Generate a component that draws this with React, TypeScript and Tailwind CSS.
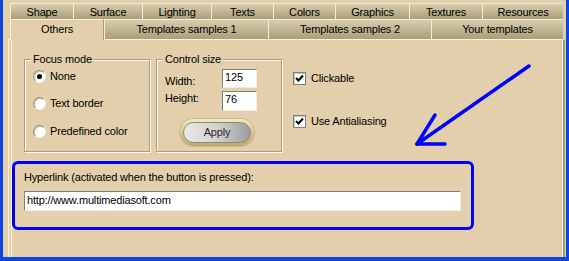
const topTabs = [
  { label: "Shape", w: "w-[63px]" },
  { label: "Surface", w: "w-[69px]" },
  { label: "Lighting", w: "w-[69px]" },
  { label: "Texts", w: "w-[62px]" },
  { label: "Colors", w: "w-[62px]" },
  { label: "Graphics", w: "w-[74px]" },
  { label: "Textures", w: "w-[73px]" },
  { label: "Resources", w: "w-[81px]" },
];

const frontTabs = [
  { label: "Templates samples 1", w: "w-[164px]" },
  { label: "Templates samples 2", w: "w-[163px]" },
  { label: "Your templates", w: "w-[132px]" },
];

const Radio = ({ label, checked }: { label: string; checked?: boolean }) => (
  <div className="flex items-center gap-[4px] h-[13px]">
    <span className="w-[13px] h-[13px] rounded-full bg-white border border-t-[#8d8a80] border-l-[#8d8a80] border-r-[#f4f1e8] border-b-[#f4f1e8] shadow-[inset_1px_1px_1px_#c9c6bc] flex items-center justify-center">
      {checked && <span className="w-[5px] h-[5px] rounded-full bg-black" />}
    </span>
    <span>{label}</span>
  </div>
);

const Check = ({ label }: { label: string }) => (
  <div className="flex items-center gap-[5px]">
    <span className="w-[13px] h-[13px] bg-white border border-[#7f7f7f] shadow-[inset_1px_1px_0_#c8c8c8] flex items-center justify-center">
      <svg width="9" height="9" viewBox="0 0 9 9">
        <polyline points="1,4 3.5,6.5 8,1.5" fill="none" stroke="black" strokeWidth="2" />
      </svg>
    </span>
    <span>{label}</span>
  </div>
);

const groupBox =
  "w-[126px] h-[99px] border border-[#a89e86] shadow-[inset_1px_1px_0_#fbf7ec,1px_1px_0_#fbf7ec]";

export default function App() {
  return (
    <div className="w-[569px] h-[261px] overflow-hidden bg-[#e3cfab] border-l-[3px] border-r-[3px] border-b-[4px] border-[#0b46e0] flex flex-col text-[11px] leading-[13px] tracking-[-0.17px] text-black font-['Liberation_Sans',Arial,sans-serif]">
      {/* tab rows */}
      <div className="pt-[3px] pl-[7px] flex flex-col">
        <div className="flex h-[16px]">
          {topTabs.map((t) => (
            <div
              key={t.label}
              className={`${t.w} h-full flex justify-center pt-[2px] border-t border-l border-[#f3ecd8] bg-gradient-to-b from-[#d9ceac] to-[#ab9d7a]`}
            >
              {t.label}
            </div>
          ))}
        </div>
        <div className="flex h-[20px]">
          <div className="relative z-10 w-[94px] h-[21px] flex justify-center pt-[3px] border-t border-l border-[#f8f2df] border-r border-r-[#a39a84] bg-[#e3cfab]">
            Others
          </div>
          {frontTabs.map((t) => (
            <div
              key={t.label}
              className={`${t.w} h-full flex justify-center pt-[3px] border-t border-l border-[#f3ecd8] bg-gradient-to-b from-[#d9ceac] to-[#ab9d7a]`}
            >
              {t.label}
            </div>
          ))}
        </div>
      </div>

      {/* tab page */}
      <div className="ml-[5px] mr-[1px] flex-1 flex border-l border-t border-[#f8f2df] border-r-2 border-r-[#a39a84] pl-[2px]">
        <div className="flex-1 flex flex-col border-l border-r border-[#f8f2df]">
          <div className="pt-[13px] pr-[27px] flex items-start">
            <fieldset className={`ml-[12px] ${groupBox}`}>
              <legend className="ml-[6px] px-[2px] bg-[#e3cfab] leading-[13px]">Focus mode</legend>
              <div className="pl-[8px] pt-[4px] flex flex-col">
                <Radio label="None" checked />
                <div className="mt-[14px]">
                  <Radio label="Text border" />
                </div>
                <div className="mt-[15px]">
                  <Radio label="Predefined color" />
                </div>
              </div>
            </fieldset>

            <fieldset className={`ml-[6px] ${groupBox}`}>
              <legend className="ml-[6px] px-[2px] bg-[#e3cfab] leading-[13px]">Control size</legend>
              <div className="pt-[3px] flex flex-col">
                <div className="flex">
                  <span className="w-[65px] pl-[8px] pt-[6px]">Width:</span>
                  <div className="w-[35px] h-[19px] bg-white border border-t-[#7f7f7f] border-l-[#7f7f7f] border-r-[#f3efe2] border-b-[#f3efe2] pl-[2px] pt-[1px]">
                    125
                  </div>
                </div>
                <div className="flex mt-[3px]">
                  <span className="w-[65px] pl-[8px] pt-[1px]">Height:</span>
                  <div className="w-[35px] h-[20px] bg-white border border-t-[#7f7f7f] border-l-[#7f7f7f] border-r-[#f3efe2] border-b-[#f3efe2] pl-[2px] pt-[1px]">
                    76
                  </div>
                </div>
                <div className="ml-[23px] mt-[8px] w-[74px] h-[27px] rounded-full p-[3px] bg-gradient-to-b from-[#f1e7c6] via-[#d8c68f] to-[#bda96f] shadow-[0_0_0_1px_#cdbb86]">
                  <div className="h-full rounded-full bg-gradient-to-r from-[#e9e9e9] via-[#d2d2d2] to-[#9d9d9d] border border-[#8f8a7a] flex items-center justify-center text-[#2a2a2a]">
                    Apply
                  </div>
                </div>
              </div>
            </fieldset>

            <div className="ml-[11px] mt-[19px] flex flex-col">
              <Check label="Clickable" />
              <div className="mt-[30px]">
                <Check label="Use Antialiasing" />
              </div>
            </div>

            <svg className="ml-auto mt-[7px]" width="125" height="90" viewBox="0 0 125 90">
              <g stroke="#0000ff" strokeWidth="3.5" strokeLinecap="round" fill="none">
                <line x1="119" y1="6" x2="7" y2="84" />
                <line x1="7" y1="84" x2="25" y2="55" />
                <line x1="7" y1="84" x2="35" y2="84" />
              </g>
            </svg>
          </div>

          <div className="mt-[9px] w-[462px] h-[69px] border-[3px] border-[#0000ff] rounded-[6px] flex flex-col">
            <div className="pl-[9px] pt-[7px]">Hyperlink (activated when the button is pressed):</div>
            <div className="ml-[9px] mt-[7px] w-[437px] h-[20px] bg-white border border-t-[#7f7f7f] border-l-[#7f7f7f] border-r-[#f3efe2] border-b-[#f3efe2] pl-[2px] pt-[2px]">
              http://www.multimediasoft.com
            </div>
          </div>
        </div>
      </div>
    </div>
  );
}
